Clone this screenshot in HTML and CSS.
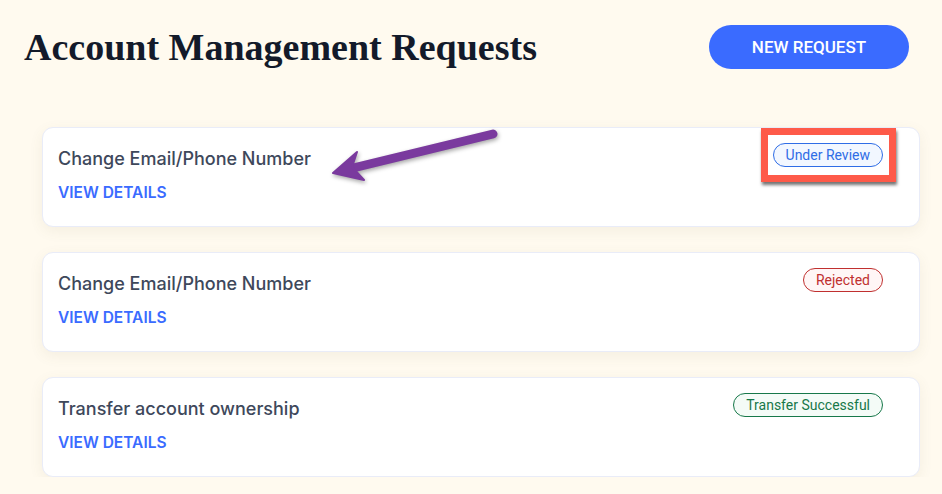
FILE: index.html
```html
<!DOCTYPE html>
<html lang="en">
  <head>
    <meta charset="UTF-8" />
    <meta name="viewport" content="width=device-width, initial-scale=1.0" />
    <title>Account Management Requests</title>
    <link rel="stylesheet" href="styles.css">
  </head>
  <body>
    <header class="top">
      <h1>Account Management Requests</h1>
      <button class="newRequest">NEW REQUEST</button>
    </header>

    <ul class="requests">
      <li class="request">
        <div class="info">
          <h3>Change Email/Phone Number</h3>
          <a href="#" class="details">VIEW DETAILS</a>
        </div>
        <div class="badgeWrap">
          <span class="badge review">Under Review</span>
          <span class="highlight"></span>
        </div>
        <svg class="arrow" width="220" height="70" viewBox="0 0 220 70">
          <line x1="170" y1="6" x2="30" y2="40" stroke="#7a3a9e" stroke-width="9" stroke-linecap="round" />
          <polygon points="10,45 34,24 29,39 41,52" fill="#7a3a9e" stroke="#7a3a9e" stroke-width="2" stroke-linejoin="round" />
        </svg>
      </li>
      <li class="request">
        <div class="info">
          <h3>Change Email/Phone Number</h3>
          <a href="#" class="details">VIEW DETAILS</a>
        </div>
        <div class="badgeWrap">
          <span class="badge rejected">Rejected</span>
        </div>
      </li>
      <li class="request">
        <div class="info">
          <h3>Transfer account ownership</h3>
          <a href="#" class="details">VIEW DETAILS</a>
        </div>
        <div class="badgeWrap">
          <span class="badge success">Transfer Successful</span>
        </div>
      </li>
    </ul>
  </body>
</html>
```

FILE: styles.css
```css
body {
  font-family: Inter, "Noto Sans", sans-serif;
  margin: 0;
  background-color: #fffaef;
}

.top {
  display: flex;
  justify-content: space-between;
  align-items: center;
  height: 44px;
  padding: 25px 33px 0 24px;
}

.top h1 {
  margin: 0;
  font-family: "Liberation Serif", serif;
  font-size: 38px;
  font-weight: bold;
  color: #131a2a;
}

.newRequest {
  width: 200px;
  height: 44px;
  background-color: #3a6bff;
  color: white;
  border: none;
  border-radius: 22px;
  font-family: Roboto, sans-serif;
  font-size: 17px;
  font-weight: 500;
  cursor: pointer;
}

.requests {
  list-style-type: none;
  margin: 58px 22px 0 42px;
  padding: 0;
  display: flex;
  flex-direction: column;
  gap: 25px;
}

.request {
  position: relative;
  display: flex;
  justify-content: space-between;
  align-items: flex-start;
  height: 100px;
  box-sizing: border-box;
  padding: 15px 36px 0 15px;
  background: #ffffff;
  border: 1px solid #e9ecf8;
  border-radius: 11px;
  box-shadow: 0 4px 14px rgba(120, 100, 60, 0.08);
}

.info h3 {
  margin: 4px 0 12px;
  font-size: 18px;
  line-height: 24px;
  font-weight: 500;
  color: #3e485b;
}

.details {
  display: block;
  font-size: 15.5px;
  line-height: 20px;
  font-weight: 600;
  color: #3a6bff;
  text-decoration: none;
}

.badgeWrap {
  position: relative;
}

.badge {
  display: block;
  height: 22px;
  line-height: 22px;
  padding: 0 12px;
  border: 1px solid;
  border-radius: 12px;
  font-family: Roboto, sans-serif;
  font-size: 14px;
}

.review {
  color: #2f6de6;
  border-color: #2f6de6;
  background: #f2f7ff;
}

.rejected {
  color: #c0302f;
  border-color: #c0302f;
  background: #fff6f6;
}

.success {
  color: #17784a;
  border-color: #17784a;
  background: #f4fbf7;
}

.highlight {
  position: absolute;
  top: -15px;
  right: -13px;
  bottom: -15px;
  left: -12px;
  border: 7px solid #fe5a49;
  box-shadow: 1px 3px 3px rgba(0, 0, 0, 0.55);
}

.arrow {
  position: absolute;
  left: 280px;
  top: 0;
  filter: drop-shadow(1px 2px 2px rgba(0, 0, 0, 0.35));
}
```
